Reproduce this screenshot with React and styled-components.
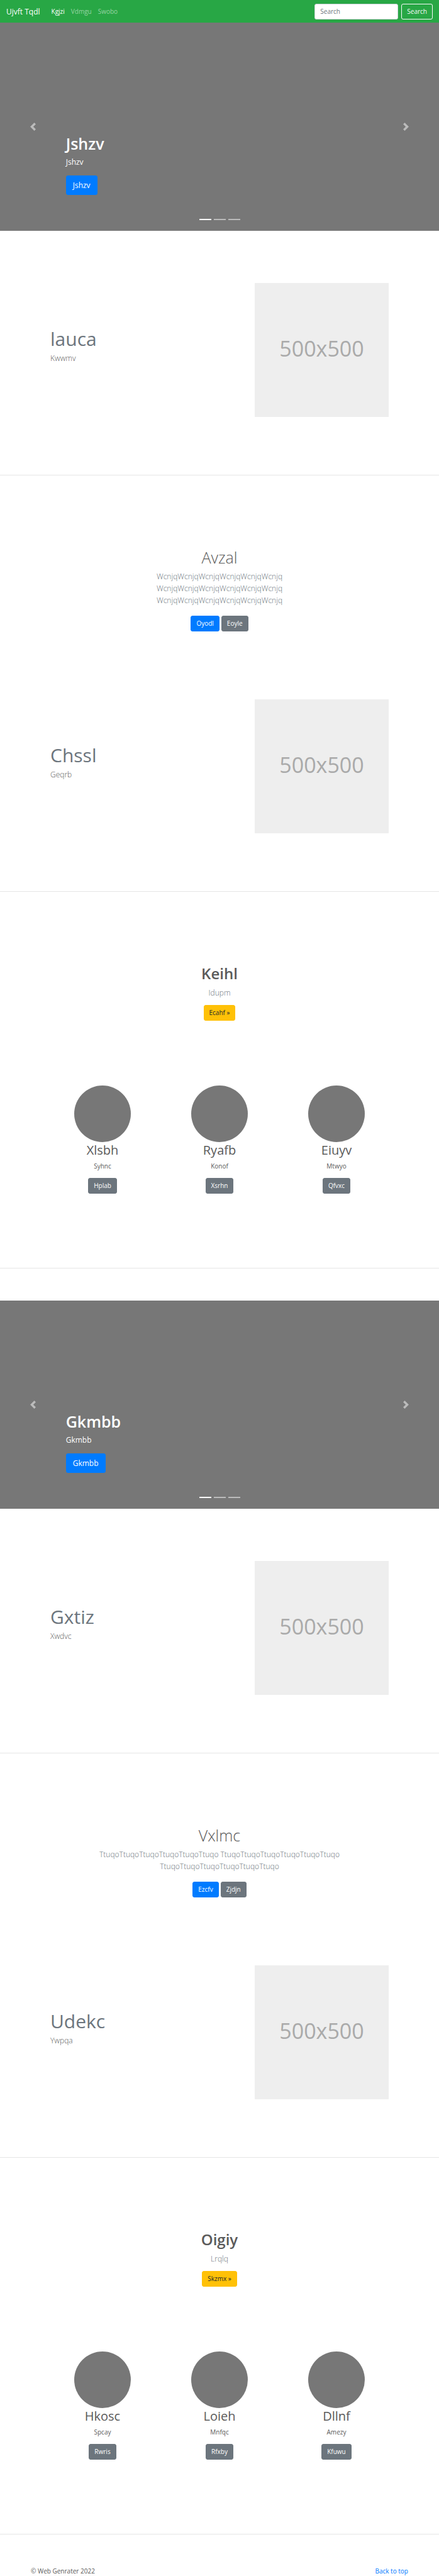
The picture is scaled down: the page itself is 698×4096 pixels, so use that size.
import React from "react";
import styled, { createGlobalStyle, css } from "styled-components";

const GlobalStyle = createGlobalStyle`
  *, *::before, *::after { box-sizing: border-box; }
  body {
    margin: 0;
    background: #fff;
    color: #5a5a5a;
    font: 400 10px/15px "Open Sans", "Noto Sans", sans-serif;
  }
  h1, h2, p { margin: 0; }
  button, input { font: inherit; margin: 0; }
`;

const Navbar = styled.header`
  display: flex;
  align-items: center;
  height: 36px;
  padding: 0 10px;
  background: #28a745;
`;

const Brand = styled.a`
  margin-right: 18px;
  color: #fff;
  font-size: 12px;
  line-height: 19px;
  text-decoration: none;
`;

const NavLinks = styled.nav`
  display: flex;
  flex: 1;
  gap: 10px;
`;

const NavLink = styled.a`
  color: ${(p) => (p.$active ? "#fff" : "rgba(255, 255, 255, 0.5)")};
  text-decoration: none;
`;

const SearchForm = styled.form`
  display: flex;
  gap: 5px;
`;

const SearchInput = styled.input`
  width: 133px;
  height: 25px;
  padding: 0 8px;
  border: 1px solid #ced4da;
  border-radius: 3px;
  background: #fff;
  color: #495057;
  &::placeholder { color: #6c757d; opacity: 1; }
`;

const tones = {
  primary: css`background: #007bff; border-color: #007bff; color: #fff;`,
  secondary: css`background: #6c757d; border-color: #6c757d; color: #fff;`,
  warning: css`background: #ffc107; border-color: #ffc107; color: #212529;`,
  outline: css`background: transparent; border-color: #f8f9fa; color: #f8f9fa;`,
};

const Button = styled.button`
  height: ${(p) => (p.$large ? 31 : 25)}px;
  padding: 0 ${(p) => (p.$large ? 10 : 8)}px;
  border: 1px solid;
  border-radius: 3px;
  font-size: ${(p) => (p.$large ? 12 : 10)}px;
  cursor: pointer;
  ${(p) => tones[p.$tone]}
`;

const Slider = styled.section`
  display: flex;
  height: 331px;
  background: #777;
  color: #fff;
`;

const SliderControl = styled.button`
  display: flex;
  flex: 0 0 15%;
  align-items: center;
  justify-content: center;
  padding: 0;
  border: 0;
  background: none;
  opacity: 0.5;
  cursor: pointer;
`;

const Slide = styled.div`
  display: flex;
  flex: 1;
  flex-direction: column;
  align-items: flex-start;
  justify-content: flex-end;
  padding-bottom: 17px;
`;

const SlideTitle = styled.h1`
  margin-bottom: 5px;
  font-size: 25px;
  font-weight: 600;
  line-height: 30px;
`;

const SlideText = styled.p`
  margin-bottom: 12px;
  font-size: 12px;
  line-height: 19px;
`;

const Indicators = styled.div`
  display: flex;
  gap: 4px;
  align-self: center;
  margin-top: 38px;
`;

const Indicator = styled.button`
  width: 19px;
  height: 2px;
  padding: 0;
  border: 0;
  background: #fff;
  opacity: ${(p) => (p.$active ? 1 : 0.5)};
`;

const Featurette = styled.section`
  display: flex;
  padding: 83px 80px 92px;
  border-bottom: 1px solid #e6e6e6;
`;

const FeatureText = styled.div`
  flex: 1;
  padding-top: 70px;
`;

const FeatureTitle = styled.h2`
  margin-bottom: 2px;
  color: #6c757d;
  font-size: 30px;
  font-weight: 400;
  line-height: 38px;
`;

const Lead = styled.p`
  font-size: 12px;
  font-weight: 300;
  line-height: 19px;
`;

const Placeholder = styled.div`
  display: flex;
  align-items: center;
  justify-content: center;
  width: 213px;
  aspect-ratio: 1;
  padding-bottom: 5px;
  background: #eee;
  color: #aaa;
  font-size: 34px;
`;

const Intro = styled.section`
  display: flex;
  flex-direction: column;
  align-items: center;
  padding: 115px 20px 25px;
  text-align: center;
`;

const IntroTitle = styled.h1`
  margin-bottom: 6px;
  font-size: ${(p) => (p.$bold ? 24 : 25)}px;
  font-weight: ${(p) => (p.$bold ? 600 : 300)};
  line-height: 30px;
`;

const MutedLead = styled(Lead)`
  max-width: 396px;
  margin-bottom: ${(p) => (p.$tight ? 10 : 15)}px;
  color: #6c757d;
`;

const ButtonRow = styled.div`
  display: flex;
  gap: 3px;
`;

const Marketing = styled.section`
  padding: 115px 70px 118px;
  border-bottom: 1px solid #e6e6e6;
`;

const MarketingHead = styled.div`
  display: flex;
  flex-direction: column;
  align-items: center;
  margin-bottom: 103px;
`;

const People = styled.div`
  display: grid;
  grid-template-columns: repeat(3, 1fr);
`;

const Person = styled.article`
  display: flex;
  flex-direction: column;
  align-items: center;
`;

const Avatar = styled.div`
  width: 90px;
  height: 90px;
  border-radius: 50%;
  background: #777;
`;

const PersonName = styled.h2`
  margin-bottom: 5px;
  font-size: 20px;
  font-weight: 400;
  line-height: 26px;
`;

const PersonText = styled.p`
  margin-bottom: 11px;
`;

const SecondPage = styled.div`
  padding-top: 51px;
`;

const Footer = styled.footer`
  display: flex;
  justify-content: space-between;
  padding: 51px 49px 0;
`;

const FooterLink = styled.a`
  color: #007bff;
  text-decoration: none;
`;

const Chevron = ({ next }) => (
  <svg width="13" height="13" viewBox="0 0 8 8" fill="#fff" aria-hidden="true">
    <path
      d={
        next
          ? "M2.75 0l-1.5 1.5L3.75 4l-2.5 2.5L2.75 8l4-4-4-4z"
          : "M5.25 0l-4 4 4 4 1.5-1.5L4.25 4l2.5-2.5L5.25 0z"
      }
    />
  </svg>
);

function Carousel({ text }) {
  return (
    <Slider>
      <SliderControl type="button" aria-label="Previous">
        <Chevron />
      </SliderControl>
      <Slide>
        <SlideTitle>{text}</SlideTitle>
        <SlideText>{text}</SlideText>
        <Button type="button" $tone="primary" $large>{text}</Button>
        <Indicators>
          {[1, 2, 3].map((n) => (
            <Indicator key={n} type="button" aria-label={`Slide ${n}`} $active={n === 1} />
          ))}
        </Indicators>
      </Slide>
      <SliderControl type="button" aria-label="Next">
        <Chevron next />
      </SliderControl>
    </Slider>
  );
}

function Feature({ title, text }) {
  return (
    <Featurette>
      <FeatureText>
        <FeatureTitle>{title}</FeatureTitle>
        <Lead>{text}</Lead>
      </FeatureText>
      <Placeholder>500x500</Placeholder>
    </Featurette>
  );
}

function Hero({ title, word, primary, secondary }) {
  const group = word.repeat(6);
  return (
    <Intro>
      <IntroTitle>{title}</IntroTitle>
      <MutedLead>{[group, group, group].join(" ")}</MutedLead>
      <ButtonRow>
        <Button type="button" $tone="primary">{primary}</Button>
        <Button type="button" $tone="secondary">{secondary}</Button>
      </ButtonRow>
    </Intro>
  );
}

function Team({ title, text, action, people }) {
  return (
    <Marketing>
      <MarketingHead>
        <IntroTitle $bold>{title}</IntroTitle>
        <MutedLead $tight>{text}</MutedLead>
        <Button type="button" $tone="warning">{action} »</Button>
      </MarketingHead>
      <People>
        {people.map(([name, about, label]) => (
          <Person key={name}>
            <Avatar />
            <PersonName>{name}</PersonName>
            <PersonText>{about}</PersonText>
            <Button type="button" $tone="secondary">{label}</Button>
          </Person>
        ))}
      </People>
    </Marketing>
  );
}

export default function App() {
  return (
    <>
      <GlobalStyle />
      <Navbar>
        <Brand href="#">Ujvft Tqdl</Brand>
        <NavLinks>
          <NavLink href="#" $active>Kgjzi</NavLink>
          <NavLink href="#">Vdmgu</NavLink>
          <NavLink href="#">Swobo</NavLink>
        </NavLinks>
        <SearchForm onSubmit={(e) => e.preventDefault()}>
          <SearchInput type="text" placeholder="Search" aria-label="Search" />
          <Button type="submit" $tone="outline">Search</Button>
        </SearchForm>
      </Navbar>
      <main>
        <Carousel text="Jshzv" />
        <Feature title="lauca" text="Kwwmv" />
        <Hero title="Avzal" word="Wcnjq" primary="Oyodl" secondary="Eoyle" />
        <Feature title="Chssl" text="Geqrb" />
        <Team
          title="Keihl"
          text="Idupm"
          action="Ecahf"
          people={[
            ["Xlsbh", "Syhnc", "Hplab"],
            ["Ryafb", "Konof", "Xsrhn"],
            ["Eiuyv", "Mtwyo", "Qfvxc"],
          ]}
        />
        <SecondPage>
          <Carousel text="Gkmbb" />
          <Feature title="Gxtiz" text="Xwdvc" />
          <Hero title="Vxlmc" word="Ttuqo" primary="Ezcfv" secondary="Zjdjn" />
          <Feature title="Udekc" text="Ywpqa" />
          <Team
            title="Oigiy"
            text="Lrqlq"
            action="Skzmx"
            people={[
              ["Hkosc", "Spcay", "Rwris"],
              ["Loieh", "Mnfqc", "Rfxby"],
              ["Dllnf", "Amezy", "Kfuwu"],
            ]}
          />
        </SecondPage>
      </main>
      <Footer>
        <p>© Web Genrater 2022</p>
        <FooterLink href="#">Back to top</FooterLink>
      </Footer>
    </>
  );
}
